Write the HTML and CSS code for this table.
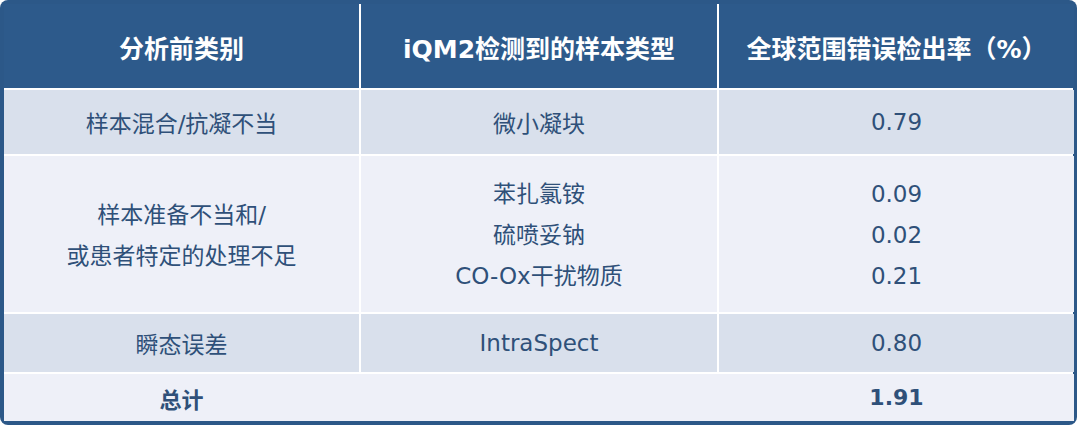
FILE: index.html
```html
<!DOCTYPE html>
<html lang="zh-CN">
<head>
<meta charset="utf-8">
<link rel="stylesheet" href="styles.css">
</head>
<body>
<div class="frame">
  <div class="grid">
    <div class="cell head">分析前类别</div>
    <div class="cell head">iQM2检测到的样本类型</div>
    <div class="cell head">全球范围错误检出率（%）</div>

    <div class="cell r1">样本混合/抗凝不当</div>
    <div class="cell r1">微小凝块</div>
    <div class="cell r1">0.79</div>

    <div class="cell r2 multi"><span>样本准备不当和/</span><span>或患者特定的处理不足</span></div>
    <div class="cell r2 multi"><span>苯扎氯铵</span><span>硫喷妥钠</span><span>CO-Ox干扰物质</span></div>
    <div class="cell r2 multi"><span>0.09</span><span>0.02</span><span>0.21</span></div>

    <div class="cell r3">瞬态误差</div>
    <div class="cell r3">IntraSpect</div>
    <div class="cell r3">0.80</div>

    <div class="total">
      <div class="cell tcell">总计</div>
      <div class="cell tcell"></div>
      <div class="cell tcell">1.91</div>
    </div>
  </div>
</div>
</body>
</html>
```

FILE: styles.css
```css
html, body {
  margin: 0;
  padding: 0;
  background: #ffffff;
}

.frame {
  width: 1077px;
  height: 425px;
  box-sizing: border-box;
  padding: 4px;
  background: #2c5888;
  border-radius: 8px;
}

.grid {
  display: grid;
  grid-template-columns: 355px 356px 355px;
  grid-template-rows: 84px 64px 156px 58px 47px;
  gap: 2px;
  background: #ffffff;
  height: 417px;
  font-family: "DejaVu Sans", "Noto Sans CJK SC", sans-serif;
  font-size: 23px;
  color: #2f5079;
}

.cell {
  display: flex;
  align-items: center;
  justify-content: center;
  text-align: center;
}

.head {
  background: #2d5a8b;
  color: #ffffff;
  font-weight: bold;
  font-size: 25px;
  padding-top: 1px;
}

.r1, .r3 {
  background: #d9e0ec;
}

.r2 {
  background: #eef0f8;
}

.multi {
  flex-direction: column;
  line-height: 41px;
  padding-top: 3px;
}

.total {
  grid-column: 1 / -1;
  display: grid;
  grid-template-columns: 355px 356px 355px;
  column-gap: 2px;
  background: #eef0f8;
}

.tcell {
  font-weight: bold;
  font-size: 22px;
}
```
